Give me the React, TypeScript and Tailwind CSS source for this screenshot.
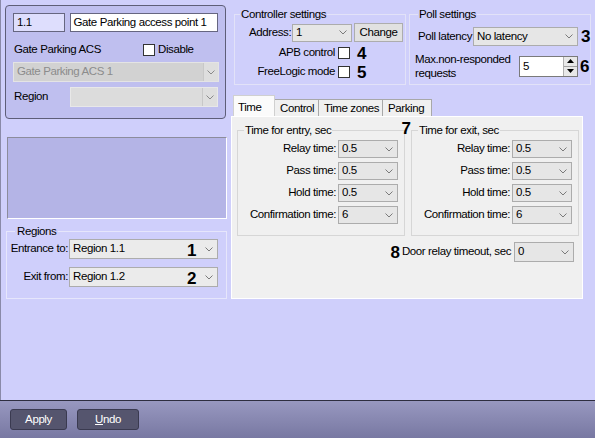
import React from 'react';

function Chevron({ color = '#7a7a7a' }: { color?: string }) {
  return (
    <svg width="8" height="5" viewBox="0 0 8 5">
      <polyline points="0.5,0.5 4,4 7.5,0.5" fill="none" stroke={color} strokeWidth="1" />
    </svg>
  );
}

function Combo({
  value,
  className = '',
  boxed = false,
  textColor = 'text-black',
}: {
  value: string;
  className?: string;
  boxed?: boolean;
  textColor?: string;
}) {
  return (
    <div className={`flex items-center border ${className}`}>
      <span className={`flex-1 pl-[3px] whitespace-nowrap ${textColor}`}>{value}</span>
      {boxed ? (
        <div className="w-[15px] h-full flex items-center justify-center border-l border-[#c8c8c8] bg-[#dedede]">
          <Chevron color="#8a8a8a" />
        </div>
      ) : (
        <div className="w-[17px] flex items-center justify-center">
          <Chevron />
        </div>
      )}
    </div>
  );
}

function Check() {
  return <div className="w-[12px] h-[12px] bg-white border border-[#333]" />;
}

function Num({ n, className = '' }: { n: string; className?: string }) {
  return <span className={`text-[17px] font-bold leading-none tracking-normal text-black ${className}`}>{n}</span>;
}

function TimeRow({ label, value }: { label: string; value: string }) {
  return (
    <div className="flex items-center h-[18px] mb-[4px]">
      <span className="w-[100px] text-right pr-[2px]">{label}</span>
      <Combo value={value} className="w-[60px] h-[18px] bg-[#e6e6e6] border-[#acacac]" />
    </div>
  );
}

export default function App() {
  return (
    <div className="w-[595px] h-[440px] bg-[#cfcffb] flex flex-col font-['Liberation_Sans',Arial,sans-serif] text-[11.5px] tracking-[-0.4px] text-black overflow-hidden">
      <div className="h-[400px] flex border-l border-[#8a8aa8]">
        {/* left column */}
        <div className="w-[230px] flex flex-col">
          <div className="mt-[5px] ml-[4px] w-[221px] h-[114px] rounded-[4px] border border-[#5e5e78] bg-[#bfbfef] px-[7px] pt-[7px]">
            <div className="flex gap-[5px]">
              <div className="w-[52px] h-[19px] bg-[#dedefd] border border-[#666680] pl-[3px] leading-[17px]">1.1</div>
              <div className="w-[150px] h-[19px] bg-white border border-[#666680] pl-[3px] leading-[17px] whitespace-nowrap">
                Gate Parking access point 1
              </div>
            </div>
            <div className="flex items-center mt-[12px] h-[12px]">
              <span className="w-[130px] pl-[1px]">Gate Parking ACS</span>
              <Check />
              <span className="ml-[3px]">Disable</span>
            </div>
            <Combo
              value="Gate Parking ACS 1"
              boxed
              textColor="text-[#8c8c8c]"
              className="mt-[6px] w-[206px] h-[20px] bg-[#d2d2d2] border-[#e4e4e4]"
            />
            <div className="flex items-center mt-[5px]">
              <span className="w-[57px] pl-[1px]">Region</span>
              <Combo value="" boxed className="w-[149px] h-[20px] bg-[#dcdcdc] border-[#e8e8e8]" />
            </div>
          </div>

          <div className="mt-[18px] ml-[6px] w-[220px] h-[82px] bg-[#b4b4e6] border-t border-l border-[#8c8c9c] border-b border-r border-b-white border-r-white" />

          <fieldset className="mt-[6px] ml-[5px] w-[221px] h-[74px] border border-[#e6e6fb]">
            <legend className="ml-[8px] px-[2px] leading-[12px]">Regions</legend>
            <div className="flex items-center mt-[2px]">
              <span className="w-[62px] text-right pr-[1px]">Entrance to:</span>
              <div className="relative">
                <Combo value="Region 1.1" className="w-[149px] h-[20px] bg-[#ebebeb] border-[#acacac]" />
                <Num n="1" className="absolute left-[118px] top-[3px]" />
              </div>
            </div>
            <div className="flex items-center mt-[8px]">
              <span className="w-[62px] text-right pr-[1px]">Exit from:</span>
              <div className="relative">
                <Combo value="Region 1.2" className="w-[149px] h-[20px] bg-[#ebebeb] border-[#acacac]" />
                <Num n="2" className="absolute left-[118px] top-[3px]" />
              </div>
            </div>
          </fieldset>
        </div>

        {/* right column */}
        <div className="flex-1 flex flex-col">
          <div className="flex mt-[8px]">
            <fieldset className="ml-[3px] w-[172px] h-[77px] border border-[#e2e2f8]">
              <legend className="ml-[5px] px-[1px] leading-[13px]">Controller settings</legend>
              <div className="flex items-center mt-[2px]">
                <span className="ml-[14px] w-[43px] whitespace-nowrap">Address:</span>
                <Combo value="1" className="w-[60px] h-[18px] bg-[#e6e6e6] border-[#acacac]" />
                <div className="ml-[2px] w-[49px] h-[19px] bg-[#e1e1e1] border border-[#adadad] flex items-center justify-center">
                  Change
                </div>
              </div>
              <div className="flex items-center mt-[5px] h-[12px]">
                <span className="w-[103px] text-right pr-[3px]">APB control</span>
                <Check />
                <Num n="4" className="ml-[7px]" />
              </div>
              <div className="flex items-center mt-[7px] h-[12px]">
                <span className="w-[103px] text-right pr-[3px]">FreeLogic mode</span>
                <Check />
                <Num n="5" className="ml-[7px]" />
              </div>
            </fieldset>

            <fieldset className="ml-[3px] w-[178px] h-[77px] border border-[#e2e2f8]">
              <legend className="ml-[8px] px-[1px] leading-[13px]">Poll settings</legend>
              <div className="flex items-center mt-[6px]">
                <span className="ml-[8px] w-[55px] whitespace-nowrap">Poll latency</span>
                <Combo value="No latency" className="w-[105px] h-[19px] bg-[#e6e6e6] border-[#acacac]" />
                <Num n="3" className="ml-[3px]" />
              </div>
              <div className="flex items-center mt-[6px]">
                <span className="ml-[5px] w-[104px] leading-[14px]">
                  Max.non-responded
                  <br />
                  requests
                </span>
                <div className="w-[59px] h-[21px] bg-white border border-[#7a7a7a] flex">
                  <span className="flex-1 pl-[3px] leading-[19px]">5</span>
                  <div className="w-[14px] flex flex-col border-l border-[#b0b0b0]">
                    <div className="flex-1 bg-[#e8e8e8] border-b border-[#a0a0a0] flex items-center justify-center">
                      <svg width="7" height="4" viewBox="0 0 7 4">
                        <polygon points="0,4 3.5,0 7,4" fill="#000" />
                      </svg>
                    </div>
                    <div className="flex-1 bg-[#e8e8e8] flex items-center justify-center">
                      <svg width="7" height="4" viewBox="0 0 7 4">
                        <polygon points="0,0 3.5,4 7,0" fill="#000" />
                      </svg>
                    </div>
                  </div>
                </div>
                <Num n="6" className="ml-[2px]" />
              </div>
            </fieldset>
          </div>

          {/* tabs */}
          <div className="mt-[10px] ml-[2px] flex items-end h-[21px]">
            <div className="w-[42px] h-[21px] bg-[#fbfbfb] border-t border-l border-r border-[#d0d0d0] pl-[4px] pt-[3px]">Time</div>
            <div className="w-[44px] h-[17px] bg-[#f0f0f0] border-t border-r border-[#a8a8a8] pl-[5px] leading-[16px]">Control</div>
            <div className="w-[64px] h-[17px] bg-[#f0f0f0] border-t border-r border-[#a8a8a8] pl-[5px] leading-[16px]">Time zones</div>
            <div className="w-[49px] h-[17px] bg-[#f0f0f0] border-t border-r border-[#a8a8a8] pl-[5px] leading-[16px]">Parking</div>
          </div>
          <div className="w-[352px] h-[183px] bg-[#f0f0f0] border border-white">
            <div className="flex mt-[7px] ml-[5px]">
              <fieldset className="relative w-[168px] h-[112px] border border-[#d6d6d6]">
                <legend className="ml-[6px] px-[1px] leading-[13px]">Time for entry, sec</legend>
                <Num n="7" className="absolute right-[-7px] top-[-17px]" />
                <div className="mt-[3px]">
                  <TimeRow label="Relay time:" value="0.5" />
                  <TimeRow label="Pass time:" value="0.5" />
                  <TimeRow label="Hold time:" value="0.5" />
                  <TimeRow label="Confirmation time:" value="6" />
                </div>
              </fieldset>
              <fieldset className="ml-[6px] w-[168px] h-[112px] border border-[#d6d6d6]">
                <legend className="ml-[6px] px-[1px] leading-[13px]">Time for exit, sec</legend>
                <div className="mt-[3px]">
                  <TimeRow label="Relay time:" value="0.5" />
                  <TimeRow label="Pass time:" value="0.5" />
                  <TimeRow label="Hold time:" value="0.5" />
                  <TimeRow label="Confirmation time:" value="6" />
                </div>
              </fieldset>
            </div>
            <div className="flex items-center justify-end mt-[6px] pr-[8px]">
              <Num n="8" />
              <span className="ml-[2px] mr-[3px]">Door relay timeout, sec</span>
              <Combo value="0" className="w-[60px] h-[20px] bg-[#e6e6e6] border-[#acacac]" />
            </div>
          </div>
        </div>
      </div>

      {/* bottom bar */}
      <div className="h-[38px] border-t border-[#2e2e40] bg-gradient-to-b from-[#9898c0] to-[#7878a2] flex items-start pt-[8px] pl-[10px] gap-[10px]">
        <div className="w-[57px] h-[21px] rounded-[3px] bg-[#55556e] border border-[#3a3a50] text-white flex items-center justify-center">
          Apply
        </div>
        <div className="w-[62px] h-[21px] rounded-[3px] bg-[#55556e] border border-[#3a3a50] text-white flex items-center justify-center">
          <span className="underline">U</span>ndo
        </div>
      </div>
      <div className="flex-1 bg-white" />
    </div>
  );
}
